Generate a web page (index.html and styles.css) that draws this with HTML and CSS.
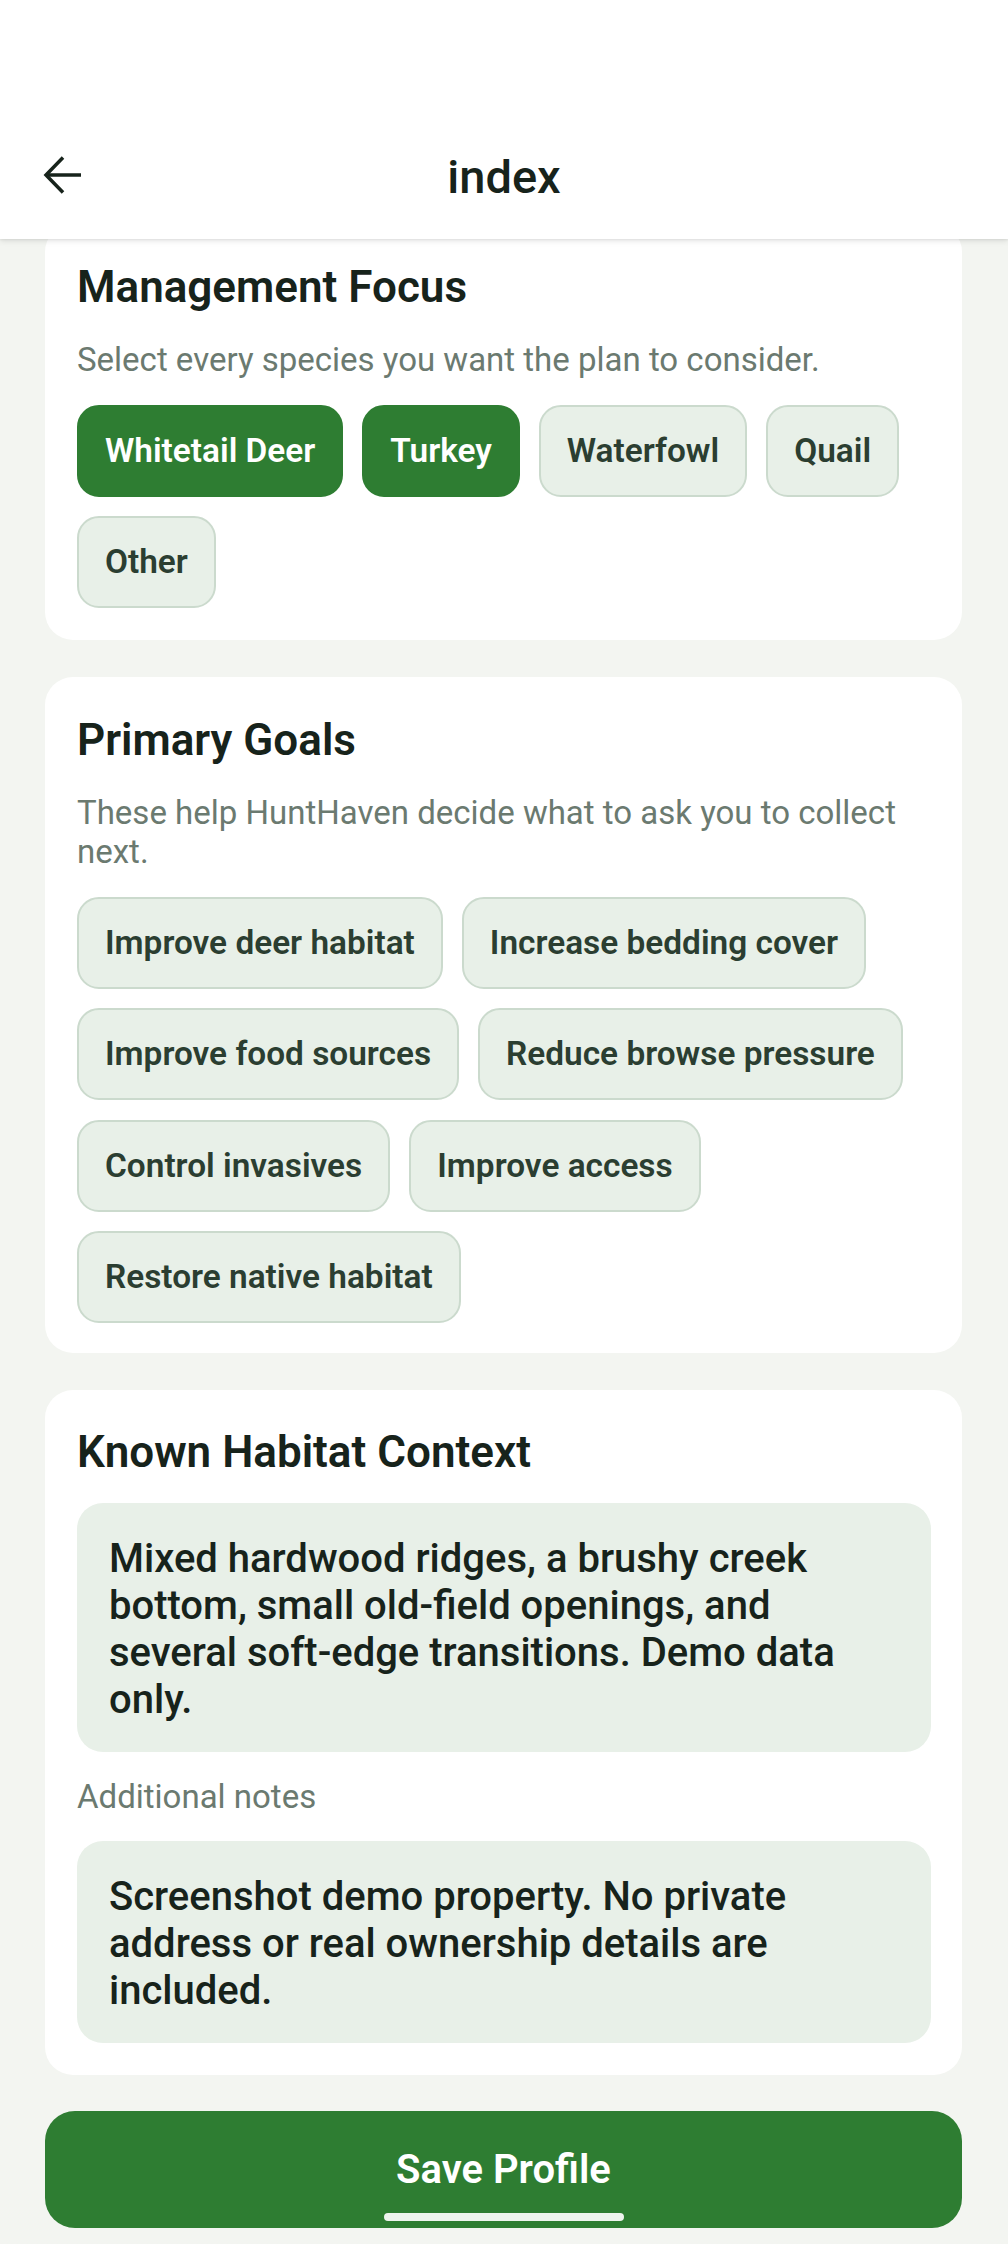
FILE: index.html
```html
<!DOCTYPE html>
<html lang="en">
<head>
<meta charset="utf-8">
<title>index</title>
<link rel="stylesheet" href="styles.css">
</head>
<body>
<div class="screen">
  <header class="appbar">
    <div class="statusbar"></div>
    <div class="toolbar">
      <button class="back" aria-label="Back">
        <svg width="40" height="40" viewBox="0 0 40 40" fill="none" stroke="#17231b" stroke-width="3.5" stroke-linejoin="miter">
          <path d="M38 20H4"/>
          <path d="M20 2.5L3 20L20 37.5"/>
        </svg>
      </button>
      <h1 class="title">index</h1>
      <span class="spacer"></span>
    </div>
  </header>

  <main class="content">
    <section class="card card-first">
      <h2 class="card-title">Management Focus</h2>
      <p class="card-desc">Select every species you want the plan to consider.</p>
      <div class="chips">
        <span class="chip selected">Whitetail Deer</span>
        <span class="chip selected">Turkey</span>
        <span class="chip">Waterfowl</span>
        <span class="chip">Quail</span>
        <span class="chip">Other</span>
      </div>
    </section>

    <section class="card">
      <h2 class="card-title">Primary Goals</h2>
      <p class="card-desc">These help HuntHaven decide what to ask you to collect next.</p>
      <div class="chips">
        <span class="chip">Improve deer habitat</span>
        <span class="chip">Increase bedding cover</span>
        <span class="chip">Improve food sources</span>
        <span class="chip">Reduce browse pressure</span>
        <span class="chip">Control invasives</span>
        <span class="chip">Improve access</span>
        <span class="chip">Restore native habitat</span>
      </div>
    </section>

    <section class="card card-form">
      <h2 class="card-title tight">Known Habitat Context</h2>
      <div class="field">Mixed hardwood ridges, a brushy creek bottom, small old-field openings, and several soft-edge transitions. Demo data only.</div>
      <div class="field-label">Additional notes</div>
      <div class="field">Screenshot demo property. No private address or real ownership details are included.</div>
    </section>

    <button class="save">Save Profile</button>
  </main>

  <div class="home-indicator"></div>
</div>
</body>
</html>
```

FILE: styles.css
```css
* {
  box-sizing: border-box;
}

html, body {
  margin: 0;
  padding: 0;
  background: #f3f5f1;
}

body {
  font-family: Roboto, "Noto Sans", "Liberation Sans", sans-serif;
  color: #17231b;
}

.screen {
  position: relative;
  width: 1008px;
  height: 2244px;
  overflow: hidden;
  background: #f3f5f1;
}

.appbar {
  position: relative;
  z-index: 2;
  background: #ffffff;
  box-shadow: 0 2px 6px rgba(0, 0, 0, 0.10), 0 1px 2px rgba(0, 0, 0, 0.06);
}

.statusbar {
  height: 110px;
}

.toolbar {
  height: 129px;
  display: grid;
  grid-template-columns: 1fr auto 1fr;
  align-items: center;
}

.back {
  justify-self: start;
  margin-left: 43px;
  padding: 0;
  border: 0;
  background: none;
  width: 40px;
  height: 40px;
  display: flex;
}

.title {
  margin: 0;
  font-size: 47px;
  font-weight: 500;
  line-height: 56px;
  color: #17231b;
  padding-top: 4px;
}

.content {
  margin-top: -15px;
  padding: 0 46px 0 45px;
  display: flex;
  flex-direction: column;
  gap: 37px;
}

.card {
  background: #ffffff;
  border-radius: 28px;
  padding: 37.5px 31px 30px 32px;
}

.card-first {
  padding-bottom: 32px;
}

.card-form {
  padding-top: 37px;
  padding-bottom: 32px;
}

.card-title {
  margin: 0 0 28px;
  font-size: 44px;
  line-height: 51.6px;
  font-weight: 600;
  color: #17231b;
}

.card-title.tight {
  margin-bottom: 24.4px;
}

.card-desc {
  margin: 0 0 25px;
  font-size: 33px;
  line-height: 38.7px;
  color: #6b7a70;
}

.chips {
  display: flex;
  flex-wrap: wrap;
  gap: 19.5px 19px;
}

.chip {
  display: inline-block;
  padding: 24px 26px;
  border: 2px solid #cbdacd;
  background: #e8f0e8;
  border-radius: 22px;
  font-size: 33.4px;
  line-height: 40px;
  font-weight: 600;
  color: #2b3e31;
  white-space: nowrap;
}

.chip.selected {
  background: #2e7d32;
  border-color: #2e7d32;
  color: #ffffff;
}

.field {
  background: #e8f0e8;
  border-radius: 26px;
  padding: 32px 32px 29px;
  font-size: 40px;
  line-height: 47px;
  font-weight: 500;
  color: #17231b;
}

.field-label {
  margin: 25.4px 0 25px;
  font-size: 33px;
  line-height: 38.7px;
  color: #6b7a70;
}

.save {
  margin-top: -1px;
  height: 117px;
  border: 0;
  border-radius: 30px;
  background: #2e7d32;
  color: #ffffff;
  font-family: Roboto, "Noto Sans", "Liberation Sans", sans-serif;
  font-size: 40px;
  font-weight: 600;
  padding: 0;
}

.home-indicator {
  position: absolute;
  left: 384px;
  top: 2213px;
  width: 240px;
  height: 8px;
  border-radius: 4px;
  background: #eef4ee;
  z-index: 3;
}
```
